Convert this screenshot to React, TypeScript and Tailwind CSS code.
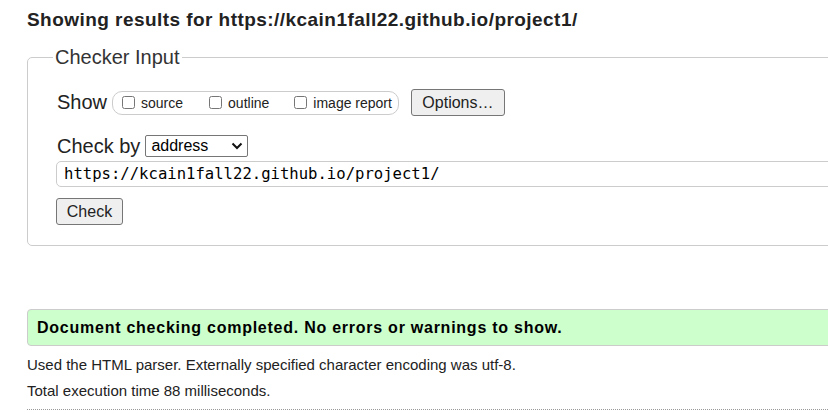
import React from "react";

const sans = "font-['Liberation_Sans',Arial,sans-serif]";

function ShowOption({ label }: { label: string }) {
  return (
    <label className="flex items-center gap-[6px]">
      <input type="checkbox" className="m-0 size-[13px]" />
      <span className="text-[14px] leading-[16px]">{label}</span>
    </label>
  );
}

export default function App() {
  return (
    <div className={`h-[414px] w-[828px] overflow-hidden bg-white text-[#222] ${sans}`}>
      <div className="w-[1100px] pl-[27px]">
        <h1 className="pt-[9px] text-[19px] font-bold leading-[22px] tracking-[0.45px] text-[#222]">
          Showing results for https://kcain1fall22.github.io/project1/
        </h1>

        <fieldset className="mt-[15px] rounded-[5px] border border-[#cccccc] pb-[20px]">
          <legend className="ml-[25px] px-[2px] text-[20px] leading-[23px] text-[#333]">
            Checker Input
          </legend>

          <div className="pl-[29px]">
            <div className="mt-[20px] flex h-[27px] items-center">
              <span className="text-[20px] leading-[23px]">Show</span>
              <div className="ml-[5px] flex h-[24px] items-center rounded-[10px] border border-[#cccccc] pl-[9px] pr-[6px]">
                <ShowOption label="source" />
                <div className="w-[26px]" />
                <ShowOption label="outline" />
                <div className="w-[25px]" />
                <ShowOption label="image report" />
              </div>
              <button className="ml-[12px] h-[27px] w-[94px] rounded-[3px] border border-[#767676] bg-[#efefef] text-[16px] leading-[18px]">
                Options…
              </button>
            </div>

            <div className="mt-[19px] flex h-[22px] items-center">
              <span className="text-[20px] leading-[23px]">Check by</span>
              <div className="ml-[5px] flex h-[22px] w-[103px] items-center justify-between rounded-[2px] border border-[#767676] pl-[5px] pr-[4px] text-[16px] leading-[18px] text-black">
                <span>address</span>
                <svg width="12" height="8" viewBox="0 0 12 8">
                  <path d="M1.5 1.5 L6 6 L10.5 1.5" fill="none" stroke="#111" strokeWidth="2" />
                </svg>
              </div>
            </div>

            <div className="-ml-[1px] mt-[4px] flex h-[26px] items-center rounded-[5px] border border-[#cccccc] pl-[7px] font-['DejaVu_Sans_Mono',monospace] text-[15.6px] leading-[18px] text-black">
              https://kcain1fall22.github.io/project1/
            </div>

            <button className="-ml-[1px] mt-[11px] block h-[27px] w-[67px] rounded-[3px] border border-[#767676] bg-[#efefef] text-[16px] leading-[18px]">
              Check
            </button>
          </div>
        </fieldset>

        <div className="mt-[63px] flex h-[37px] items-center rounded-[4px] border border-[#cccccc] bg-[#ccffcc] pl-[9px] text-[16px] font-bold leading-[18px] tracking-[0.75px] text-black">
          Document checking completed. No errors or warnings to show.
        </div>

        <p className="mt-[11px] text-[15px] leading-[16px] text-[#222]">
          Used the HTML parser. Externally specified character encoding was utf-8.
        </p>
        <p className="mt-[10px] text-[15px] leading-[16px] text-[#222]">
          Total execution time 88 milliseconds.
        </p>
        <div className="mt-[10px] border-t border-dotted border-[#999]" />
      </div>
    </div>
  );
}
